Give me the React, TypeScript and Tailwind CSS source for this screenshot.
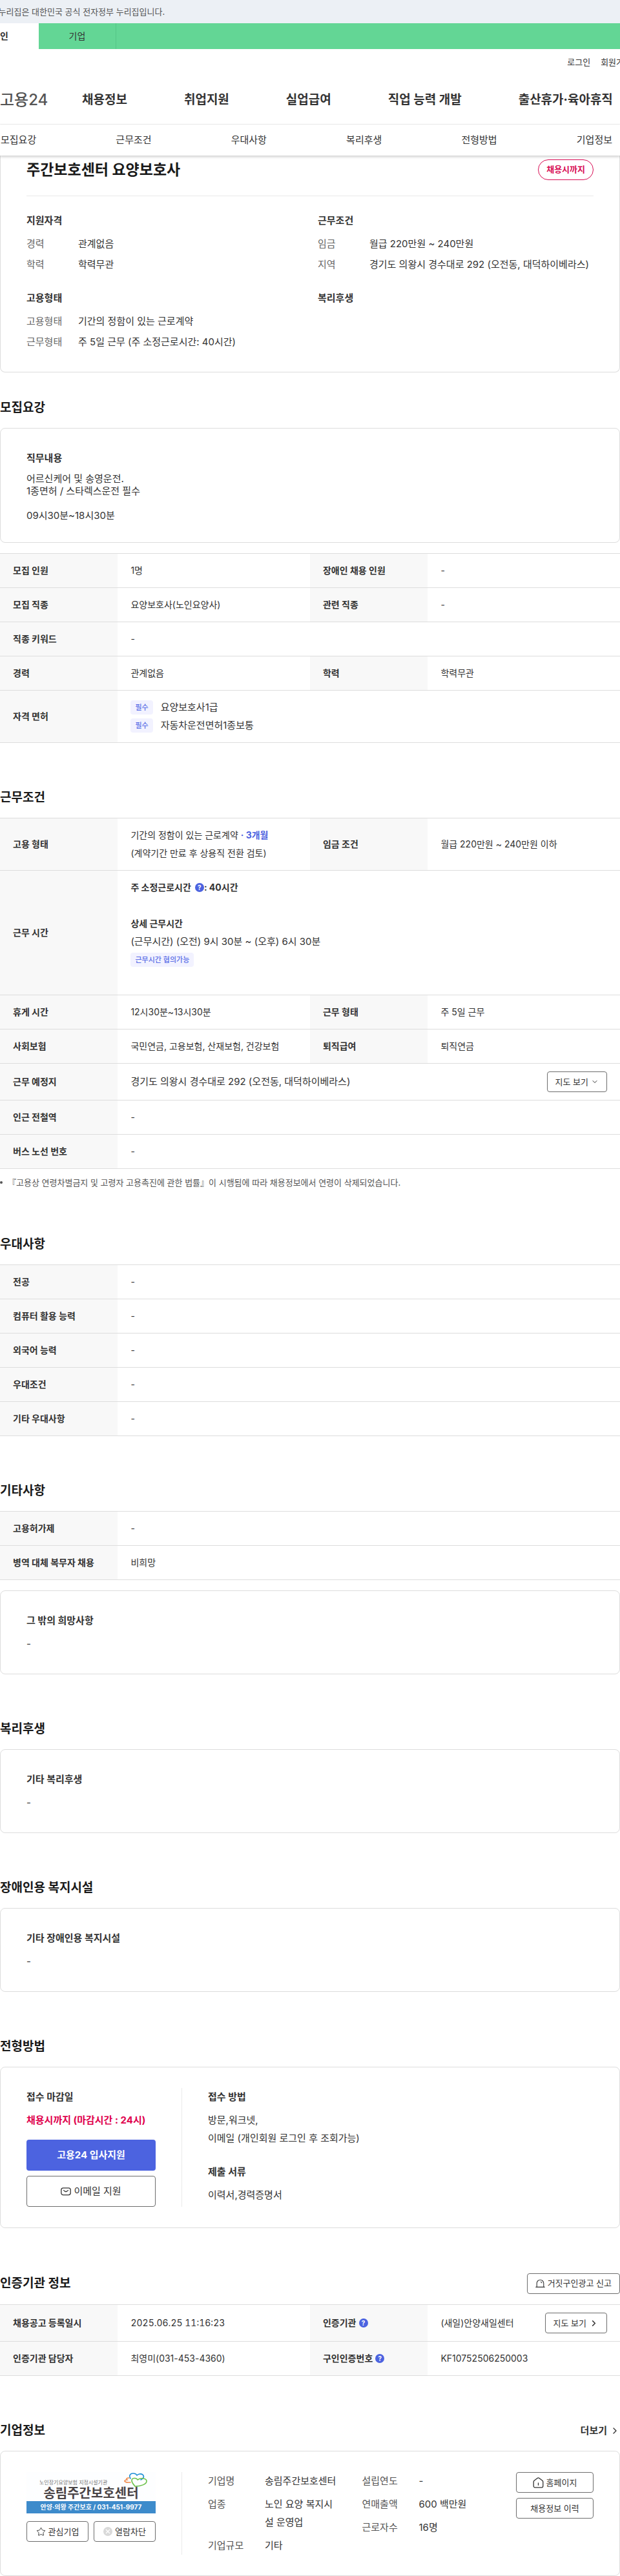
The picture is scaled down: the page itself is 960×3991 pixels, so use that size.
import type { ReactNode } from 'react'
import { ChevronDown, ChevronRight, Star } from 'lucide-react'

type Cell = { label: ReactNode; value: ReactNode }

const mainMenu = [
  '채용정보',
  '취업지원',
  '실업급여',
  '직업 능력 개발',
  '출산휴가·육아휴직',
]

const anchorMenu = [
  '모집요강',
  '근무조건',
  '우대사항',
  '복리후생',
  '전형방법',
  '기업정보',
]

const summary = [
  {
    title: '지원자격',
    items: [
      ['경력', '관계없음'],
      ['학력', '학력무관'],
    ],
  },
  {
    title: '근무조건',
    items: [
      ['임금', '월급 220만원 ~ 240만원'],
      ['지역', '경기도 의왕시 경수대로 292 (오전동, 대덕하이베라스)'],
    ],
  },
  {
    title: '고용형태',
    items: [
      ['고용형태', '기간의 정함이 있는 근로계약'],
      ['근무형태', '주 5일 근무 (주 소정근로시간: 40시간)'],
    ],
  },
  { title: '복리후생', items: [] },
]

function Badge({ children }: { children: ReactNode }) {
  return (
    <span className="inline-flex h-[22px] items-center rounded bg-[#f2f2ff] px-[7px] text-[11px] leading-4 font-medium text-[#5a6ee6]">
      {children}
    </span>
  )
}

function HelpButton({ label }: { label: string }) {
  return (
    <button
      type="button"
      aria-label={label}
      className="inline-flex size-[14px] items-center justify-center rounded-full bg-[#4c63e0] text-[10px] leading-none font-bold text-white"
    >
      ?
    </button>
  )
}

function SmallButton({
  children,
  className = 'px-3',
}: {
  children: ReactNode
  className?: string
}) {
  return (
    <button
      type="button"
      className={`inline-flex h-8 shrink-0 items-center justify-center gap-1 rounded border border-[#6d6d6d] bg-white text-[13px] whitespace-nowrap text-[#333] ${className}`}
    >
      {children}
    </button>
  )
}

function Section({
  title,
  action,
  children,
}: {
  title: string
  action?: ReactNode
  children: ReactNode
}) {
  return (
    <section className="mt-[70px]">
      <div className="mb-4 flex items-center justify-between">
        <h2 className="text-[19px] leading-[30px] font-bold text-[#1a1a1a]">
          {title}
        </h2>
        {action}
      </div>
      {children}
    </section>
  )
}

function Card({
  className = '',
  children,
}: {
  className?: string
  children: ReactNode
}) {
  return (
    <div
      className={`rounded-lg border border-[#ddd] px-10 py-8 text-[15px] leading-7 ${className}`}
    >
      {children}
    </div>
  )
}

function TextCard({ title, text = '-' }: { title: string; text?: string }) {
  return (
    <Card>
      <h3 className="mb-2 font-bold">{title}</h3>
      <p>{text}</p>
    </Card>
  )
}

function InfoTable({ rows }: { rows: Cell[][] }) {
  return (
    <table className="w-full table-fixed border-t border-[#ddd] text-left text-sm leading-7">
      <colgroup>
        <col className="w-[19%]" />
        <col className="w-[31%]" />
        <col className="w-[19%]" />
        <col className="w-[31%]" />
      </colgroup>
      <tbody>
        {rows.map((row, i) => (
          <tr key={i} className="border-b border-[#ddd]">
            {row.map((cell, j) => (
              <Row key={j} cell={cell} wide={row.length === 1} />
            ))}
          </tr>
        ))}
      </tbody>
    </table>
  )
}

function Row({ cell, wide }: { cell: Cell; wide: boolean }) {
  return (
    <>
      <th scope="row" className="bg-[#f8f8f8] px-5 py-3 font-bold">
        {cell.label}
      </th>
      <td colSpan={wide ? 3 : 1} className="px-5 py-3">
        {cell.value}
      </td>
    </>
  )
}

function MailIcon() {
  return (
    <svg width="16" height="16" viewBox="0 0 16 16" fill="none" stroke="#333" strokeWidth="1.3" aria-hidden="true">
      <rect x="0.8" y="2.8" width="14.4" height="10.8" rx="3" />
      <path d="M4.5 6.5c1.3.5 2 2 3.500 2s2.200-1.500 3.500-2" strokeLinecap="round" />
    </svg>
  )
}

function SirenIcon() {
  return (
    <svg width="15" height="14" viewBox="0 0 15 14" fill="none" stroke="#333" strokeWidth="1.1" aria-hidden="true">
      <path d="M2.200 12V6.500a5.300 5.300 0 0 1 10.600 0V12M.8 12.400h13.400" strokeLinecap="round" />
      <path d="M8.300 4.200c.9.200 1.500.8 1.700 1.600" strokeLinecap="round" />
    </svg>
  )
}

function HomeIcon() {
  return (
    <svg width="17" height="17" viewBox="0 0 17 17" fill="none" stroke="#333" strokeWidth="1.3" strokeLinejoin="round" aria-hidden="true">
      <path d="M1.200 7.200c0-.8.3-1.400.9-1.900L7 1.500c.9-.7 2.100-.7 3 0l4.900 3.800c.6.500.9 1.100.9 1.900v6.300c0 1.300-.8 2.300-2.100 2.300H3.300c-1.300 0-2.100-1-2.100-2.300z" />
      <path d="M8.500 9v3.200" strokeLinecap="round" />
    </svg>
  )
}

function BlockIcon() {
  return (
    <svg width="14" height="14" viewBox="0 0 14 14" aria-hidden="true">
      <circle cx="7" cy="7" r="7" fill="#d9d9d9" />
      <path d="m4 4 6 6m0-6-6 6" stroke="#fff" strokeWidth="1.3" />
    </svg>
  )
}

function CompanyLogo() {
  return (
    <div className="relative flex h-16 flex-col overflow-hidden bg-[#fdfeff]">
      <svg className="absolute top-0 right-3" width="38" height="23" viewBox="0 0 38 23" fill="none" strokeWidth="1.6" strokeLinecap="round" aria-hidden="true">
        <path d="M11 10C8 5 11 2 15 2c3 0 5 1 6 3 2-2 6-3 9-1 3 3 1 6-3 8" stroke="#1d8fd6" />
        <path d="M9 9c-4 0-5 1-3 3-4 0-5 2-3 3 2 1.500 5 1 8 1" stroke="#f08a4b" />
        <path d="M22 12c-2-4-9-3-9 1 0 4 3 6 5 9 9 0 18-3 18-8 0-4-8-6-14-2" stroke="#6cc24a" />
      </svg>
      <div className="flex h-[45px] flex-col justify-end px-5">
        <span className="text-[8px] leading-[9px] text-[#777]">
          노인장기요양보험 지정시설기관
        </span>
        <strong className="text-center text-xl leading-6 text-[#4a4446]">
          송림주간보호센터
        </strong>
      </div>
      <span className="bg-[#3d8bcb] text-center text-[10px] leading-[19px] font-bold text-white">
        안양·의왕 주간보호 / 031-451-9977
      </span>
    </div>
  )
}

function Header() {
  return (
    <header className="overflow-hidden whitespace-nowrap">
      <div className="h-9 bg-[#ecf0f5]">
        <p className="-ml-[18px] text-[13px] leading-9 text-[#555]">
          이 누리집은 대한민국 공식 전자정부 누리집입니다.
        </p>
      </div>
      <div className="flex h-10 bg-[#63d695] text-sm leading-10">
        <a href="#personal" className="-ml-15 w-30 bg-white text-center font-bold">
          개인
        </a>
        <a href="#company" className="w-30 border-r border-[#55c586] text-center">
          기업
        </a>
      </div>
      <div className="-mr-[18px] flex justify-end gap-4 pt-2.5 text-[13px] leading-5">
        <a href="#login">로그인</a>
        <a href="#join">회원가입</a>
      </div>
      <div className="flex h-[87px] items-center border-b border-[#eee] pt-3">
        <a href="#home" className="w-[127px] shrink-0 text-2xl font-medium text-[#555]">
          고용24
        </a>
        <nav className="flex gap-[88px] text-[19px] font-bold">
          {mainMenu.map((item) => (
            <a key={item} href="#menu">
              {item}
            </a>
          ))}
        </nav>
      </div>
    </header>
  )
}

const recruitRows: Cell[][] = [
  [
    { label: '모집 인원', value: '1명' },
    { label: '장애인 채용 인원', value: '-' },
  ],
  [
    { label: '모집 직종', value: '요양보호사(노인요양사)' },
    { label: '관련 직종', value: '-' },
  ],
  [{ label: '직종 키워드', value: '-' }],
  [
    { label: '경력', value: '관계없음' },
    { label: '학력', value: '학력무관' },
  ],
  [
    {
      label: '자격 면허',
      value: (
        <ul className="text-[15px]">
          {['요양보호사1급', '자동차운전면허1종보통'].map((name) => (
            <li key={name} className="flex h-7 items-center gap-3">
              <Badge>필수</Badge>
              {name}
            </li>
          ))}
        </ul>
      ),
    },
  ],
]

const workRows: Cell[][] = [
  [
    {
      label: '고용 형태',
      value: (
        <>
          <p>
            기간의 정함이 있는 근로계약{' '}
            <strong className="text-[#4c63e0]">· 3개월</strong>
          </p>
          <p>(계약기간 만료 후 상용직 전환 검토)</p>
        </>
      ),
    },
    { label: '임금 조건', value: '월급 220만원 ~ 240만원 이하' },
  ],
  [
    {
      label: '근무 시간',
      value: (
        <>
          <p className="mb-7 flex items-center font-bold">
            <span className="mr-1.5">주 소정근로시간</span>
            <HelpButton label="주 소정근로시간 도움말" />: 40시간
          </p>
          <p className="font-bold">상세 근무시간</p>
          <p className="text-[15px]">
            (근무시간) (오전) 9시 30분 ~ (오후) 6시 30분
          </p>
          <p className="mb-7 flex h-7 items-center">
            <Badge>근무시간 협의가능</Badge>
          </p>
        </>
      ),
    },
  ],
  [
    { label: '휴게 시간', value: '12시30분~13시30분' },
    { label: '근무 형태', value: '주 5일 근무' },
  ],
  [
    { label: '사회보험', value: '국민연금, 고용보험, 산재보험, 건강보험' },
    { label: '퇴직급여', value: '퇴직연금' },
  ],
  [
    {
      label: '근무 예정지',
      value: (
        <div className="flex items-center justify-between text-[15px]">
          경기도 의왕시 경수대로 292 (오전동, 대덕하이베라스)
          <SmallButton>
            지도 보기 <ChevronDown size={12} />
          </SmallButton>
        </div>
      ),
    },
  ],
  [{ label: '인근 전철역', value: '-' }],
  [{ label: '버스 노선 번호', value: '-' }],
]

const preferRows: Cell[][] = [
  '전공',
  '컴퓨터 활용 능력',
  '외국어 능력',
  '우대조건',
  '기타 우대사항',
].map((label) => [{ label, value: '-' }])

const etcRows: Cell[][] = [
  [{ label: '고용허가제', value: '-' }],
  [{ label: '병역 대체 복무자 채용', value: '비희망' }],
]

const agencyRows: Cell[][] = [
  [
    {
      label: '채용공고 등록일시',
      value: <time className="tabular-nums">2025.06.25 11:16:23</time>,
    },
    {
      label: (
        <span className="flex items-center gap-1">
          인증기관 <HelpButton label="인증기관 도움말" />
        </span>
      ),
      value: (
        <div className="flex items-center justify-between">
          (새일)안양새일센터
          <SmallButton>
            지도 보기 <ChevronRight size={15} strokeWidth={2.5} />
          </SmallButton>
        </div>
      ),
    },
  ],
  [
    { label: '인증기관 담당자', value: '최영미(031-453-4360)' },
    {
      label: (
        <span className="flex items-center gap-1">
          구인인증번호 <HelpButton label="구인인증번호 도움말" />
        </span>
      ),
      value: 'KF10752506250003',
    },
  ],
]

function DetailList({ items }: { items: string[][] }) {
  return (
    <dl className="flex flex-1 flex-col gap-2">
      {items.map(([term, value]) => (
        <div key={term} className="flex">
          <dt className="w-[88px] shrink-0 text-[#555]">{term}</dt>
          <dd>{value}</dd>
        </div>
      ))}
    </dl>
  )
}

export default function App() {
  return (
    <div className="bg-white font-['Inter','Noto_Sans_CJK_KR',sans-serif] text-[#333]">
      <Header />

      <nav className="relative flex h-12 items-center justify-between bg-white pr-3 pl-px text-[15px] shadow-[0_2px_4px_rgba(0,0,0,0.2)]">
        {anchorMenu.map((item) => (
          <a key={item} href="#section">
            {item}
          </a>
        ))}
      </nav>

      <main>
        <section className="rounded-b-lg border border-t-0 border-[#ddd] px-10 pt-1.5 pb-8">
          <div className="flex items-center justify-between border-b border-[#eaeaea] pb-6">
            <h1 className="text-[23px] leading-8 font-bold text-[#1a1a1a]">
              주간보호센터 요양보호사
            </h1>
            <span className="flex h-8 items-center rounded-full border border-[#d80d54] px-3 text-[13px] font-bold text-[#d80d54]">
              채용시까지
            </span>
          </div>
          <div className="mt-6 grid grid-cols-2 gap-6 text-[15px] leading-7">
            {summary.map((group) => (
              <div key={group.title}>
                <h3 className="mb-2 font-bold">{group.title}</h3>
                <dl className="flex flex-col gap-1">
                  {group.items.map(([term, value]) => (
                    <div key={term} className="flex">
                      <dt className="w-20 shrink-0 text-[#666]">{term}</dt>
                      <dd className="whitespace-nowrap">{value}</dd>
                    </div>
                  ))}
                </dl>
              </div>
            ))}
          </div>
        </section>

        <section className="mt-10">
          <h2 className="mb-4 text-[19px] leading-[30px] font-bold text-[#1a1a1a]">
            모집요강
          </h2>
          <Card className="mb-4">
            <h3 className="mb-2 font-bold">직무내용</h3>
            <p className="leading-[19px] whitespace-pre-line">
              {'어르신케어 및 송영운전.\n1종면허 / 스타렉스운전 필수\n\n09시30분~18시30분'}
            </p>
          </Card>
          <InfoTable rows={recruitRows} />
        </section>

        <Section title="근무조건">
          <InfoTable rows={workRows} />
          <p className="mt-2.5 flex items-center gap-2 text-[13px] leading-[22px] text-[#555]">
            <span className="size-1 rounded-full bg-[#555]" />
            『고용상 연령차별금지 및 고령자 고용촉진에 관한 법률』이 시행됨에
            따라 채용정보에서 연령이 삭제되었습니다.
          </p>
        </Section>

        <Section title="우대사항">
          <InfoTable rows={preferRows} />
        </Section>

        <Section title="기타사항">
          <div className="flex flex-col gap-4">
            <InfoTable rows={etcRows} />
            <TextCard title="그 밖의 희망사항" />
          </div>
        </Section>

        <Section title="복리후생">
          <TextCard title="기타 복리후생" />
        </Section>

        <Section title="장애인용 복지시설">
          <TextCard title="기타 장애인용 복지시설" />
        </Section>

        <Section title="전형방법">
          <Card className="flex">
            <div className="mr-10 w-[200px] shrink-0">
              <h3 className="mb-2 font-bold">접수 마감일</h3>
              <p className="mb-4 font-bold text-[#e0004d]">
                채용시까지 (마감시간 : 24시)
              </p>
              <button
                type="button"
                className="mb-2 h-12 w-full rounded bg-[#4c63e0] font-bold text-white"
              >
                고용24 입사지원
              </button>
              <button
                type="button"
                className="flex h-12 w-full items-center justify-center gap-1 rounded border border-[#6d6d6d]"
              >
                <MailIcon />
                이메일 지원
              </button>
            </div>
            <div className="border-l border-[#eaeaea] pl-10">
              <h3 className="mb-2 font-bold">접수 방법</h3>
              <p>방문,워크넷,</p>
              <p>이메일 (개인회원 로그인 후 조회가능)</p>
              <h3 className="mt-6 mb-2 font-bold">제출 서류</h3>
              <p>이력서,경력증명서</p>
            </div>
          </Card>
        </Section>

        <Section
          title="인증기관 정보"
          action={
            <SmallButton>
              <SirenIcon />
              거짓구인광고 신고
            </SmallButton>
          }
        >
          <InfoTable rows={agencyRows} />
        </Section>

        <Section
          title="기업정보"
          action={
            <a href="#company" className="flex items-center gap-1 text-[15px] font-bold">
              더보기 <ChevronRight size={16} />
            </a>
          }
        >
          <Card className="flex">
            <div className="mr-10 w-[200px] shrink-0">
              <CompanyLogo />
              <div className="mt-3 grid grid-cols-2 gap-2">
                <SmallButton className="px-1">
                  <Star size={15} strokeWidth={1.5} />
                  관심기업
                </SmallButton>
                <SmallButton className="px-1">
                  <BlockIcon />
                  열람차단
                </SmallButton>
              </div>
            </div>
            <div className="flex flex-1 border-l border-[#eaeaea] pl-10">
              <div className="mr-10 w-[112px] flex-1">
                <DetailList
                  items={[
                    ['기업명', '송림주간보호센터'],
                    ['업종', '노인 요양 복지시설 운영업'],
                    ['기업규모', '기타'],
                  ]}
                />
              </div>
              <div className="mr-10 w-[112px] flex-1">
                <DetailList
                  items={[
                    ['설립연도', '-'],
                    ['연매출액', '600 백만원'],
                    ['근로자수', '16명'],
                  ]}
                />
              </div>
            </div>
            <div className="flex w-[120px] shrink-0 flex-col gap-2">
              <SmallButton>
                <HomeIcon />
                홈페이지
              </SmallButton>
              <SmallButton>채용정보 이력</SmallButton>
            </div>
          </Card>
        </Section>
      </main>
    </div>
  )
}
